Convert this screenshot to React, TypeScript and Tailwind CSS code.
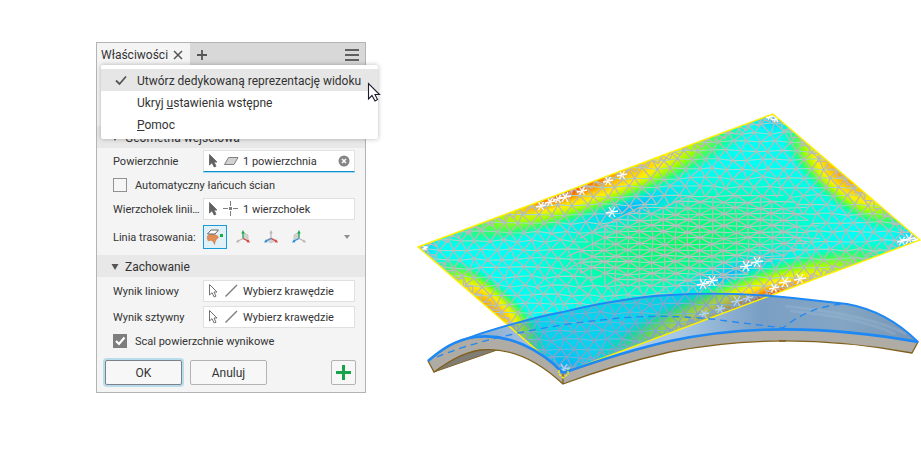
import React from "react";

type Point = [number, number];

const QUAD = "418,247 773,114 920,240 563,373";

const noise = (a: number, b: number) => {
  const v = Math.sin(a * 127.1 + b * 311.7) * 43758.5453;
  return v - Math.floor(v) - 0.5;
};

const outerNode = (i: number, j: number): Point => [
  412 + i * 14 + (j % 2 ? 7 : 0) + noise(i, j) * 4,
  106 + j * 9 + noise(j + 40, i) * 3,
];

const innerNode = (i: number, j: number): Point => [
  412 + i * 24 + (j % 2 ? 12 : 0) + noise(i, j) * 2,
  106 + j * 6 + noise(j + 40, i) * 2,
];

const inCore = ([x, y]: Point) => {
  const dx = (x - 690) / 115;
  const dy = (y - 238 + (x - 690) * 0.15) / 44;
  return dx * dx + dy * dy < 1;
};

function buildMesh() {
  let flat = "";
  let slanted = "";
  const seg = (a: Point, b: Point) =>
    `M${a[0].toFixed(1)} ${a[1].toFixed(1)}L${b[0].toFixed(1)} ${b[1].toFixed(1)}`;
  for (let j = 0; j < 31; j++) {
    for (let i = 0; i < 38; i++) {
      const p = outerNode(i, j);
      if (inCore(p)) continue;
      const shift = j % 2;
      flat += seg(p, outerNode(i + 1, j));
      slanted += seg(p, outerNode(i + shift, j + 1)) + seg(p, outerNode(i + shift - 1, j + 1));
    }
  }
  for (let j = 0; j < 46; j++) {
    for (let i = 0; i < 22; i++) {
      const p = innerNode(i, j);
      if (!inCore(p)) continue;
      const shift = j % 2;
      flat += seg(p, innerNode(i + 1, j));
      slanted += seg(p, innerNode(i + shift, j + 1)) + seg(p, innerNode(i + shift - 1, j + 1)) + seg(p, innerNode(i, j + 2));
    }
  }
  // Finer elements along the border of the sheet
  const edges: [Point, Point, Point][] = [
    [[418, 247], [773, 114], [2, 6]],
    [[563, 373], [920, 240], [-2, -6]],
    [[773, 114], [920, 240], [-5, 4]],
    [[418, 247], [563, 373], [5, -4]],
  ];
  edges.forEach(([a, b, n]) => {
    const count = Math.round(Math.hypot(b[0] - a[0], b[1] - a[1]) / 12);
    for (let k = 0; k < count; k++) {
      const at = (t: number, d: number): Point => [
        a[0] + ((b[0] - a[0]) * t) / count + n[0] * d,
        a[1] + ((b[1] - a[1]) * t) / count + n[1] * d,
      ];
      slanted += seg(at(k, 0), at(k + 0.5, 1)) + seg(at(k + 0.5, 1), at(k + 1, 0));
    }
  });
  return { flat, slanted };
}

const mesh = buildMesh();

const sparks: [number, number, number][] = [
  [612, 212, 6], [746, 266, 6], [757, 262, 6], [703, 284, 6], [712, 281, 6],
  [541, 206, 5], [550, 202, 5], [558, 199, 5], [565, 197, 6], [582, 191, 5],
  [608, 181, 5], [622, 175, 5], [770, 117, 4], [776, 119, 4], [902, 241, 5],
  [909, 239, 6], [916, 240, 4], [785, 282, 6], [800, 279, 6], [774, 288, 5],
  [564, 369, 6], [737, 301, 6], [748, 298, 5], [720, 309, 5], [704, 314, 5],
  [425, 248, 3],
];

const starPath = sparks
  .map(([x, y, r]) => `M${x - r} ${y + 1}L${x + r} ${y - 1}M${x - r / 2} ${y - r + 1}L${x + r / 2} ${y + r - 1}M${x + r / 2} ${y - r + 1}L${x - r / 2} ${y + r - 1}`)
  .join("");

const TOP = "M468 338C490 330 535 317 563 312C600 303 635 297 670 295C720 292 757 294 793 298L847 304C875 309 897 321 918 342";
const FRONT = "M918 342C830 326 745 325 670 341C630 350 600 360 563 373";
const ARC = "M428 361C442 349 455 340 475 337C508 333 540 349 563 373";
const SHELL = `${TOP}C830 326 745 325 670 341C630 350 600 360 563 373C540 349 508 333 475 337C455 340 442 349 428 361C445 348 455 343 468 338Z`;

function Model() {
  return (
    <svg className="mt-[100px] ml-11 min-w-0 flex-1" viewBox="410 100 511 300" role="img" aria-label="Model">
      <defs>
        <clipPath id="sheet"><polygon points={QUAD} /></clipPath>
        <radialGradient id="hot">
          <stop offset="0" stopColor="#ff9800" />
          <stop offset=".22" stopColor="#ffc000" />
          <stop offset=".45" stopColor="#fff000" />
          <stop offset=".62" stopColor="#a0ff00" />
          <stop offset=".8" stopColor="#30ff60" stopOpacity=".8" />
          <stop offset="1" stopColor="#00ffa0" stopOpacity="0" />
        </radialGradient>
        <radialGradient id="core">
          <stop offset="0" stopColor="#00ff60" />
          <stop offset=".4" stopColor="#00ff78" stopOpacity=".85" />
          <stop offset="1" stopColor="#00ffd0" stopOpacity="0" />
        </radialGradient>
        <radialGradient id="cold">
          <stop offset="0" stopColor="#00b8ff" />
          <stop offset="1" stopColor="#00e8ff" stopOpacity="0" />
        </radialGradient>
        <radialGradient id="red">
          <stop offset="0" stopColor="#ff4800" />
          <stop offset="1" stopColor="#ff8000" stopOpacity="0" />
        </radialGradient>
        <linearGradient id="glass" x1="0" y1="0" x2="1" y2="0">
          <stop offset="0" stopColor="#7598bf" />
          <stop offset=".3" stopColor="#b8d2ed" />
          <stop offset=".52" stopColor="#a5c5e2" />
          <stop offset=".68" stopColor="#7a9fc4" />
          <stop offset=".84" stopColor="#84a6c4" />
          <stop offset="1" stopColor="#7795b5" />
        </linearGradient>
      </defs>

      <path d="M434 372C452 357 475 348 500 349Z" fill="#7f7d76" stroke="#80622a" />
      <path d="M428 361C442 349 455 340 475 337C508 333 540 349 563 373C600 360 630 350 670 341C745 325 830 326 918 342L912 353C830 338 750 336 670 352C635 360 600 370 563 384C535 358 508 347 480 350C462 353 448 362 434 372Z" fill="#aeaca5" stroke="#80601c" strokeWidth="1.3" />
      <path d="M563 373V384M779 341H786" stroke="#80601c" strokeWidth="1.3" />
      <path d={SHELL} fill="url(#glass)" />
      <path d="M785 306C840 312 880 320 906 334M790 311C835 315 870 322 895 334" fill="none" stroke="#a9c3da" strokeWidth="3" opacity=".25" />

      <g clipPath="url(#sheet)">
        <polygon points={QUAD} fill="#00fff4" />
        <ellipse cx="680" cy="242" rx="180" ry="68" fill="url(#core)" transform="rotate(-12 680 242)" />
        <ellipse cx="630" cy="207" rx="85" ry="20" fill="url(#cold)" transform="rotate(-18 630 207)" />
        <ellipse cx="728" cy="275" rx="85" ry="18" fill="url(#cold)" transform="rotate(-20 728 275)" />
        <ellipse cx="418" cy="247" rx="26" ry="18" fill="url(#cold)" />
        <ellipse cx="773" cy="114" rx="26" ry="24" fill="url(#cold)" />
        <ellipse cx="920" cy="240" rx="34" ry="18" fill="url(#cold)" />
        <ellipse cx="563" cy="370" rx="34" ry="30" fill="url(#cold)" />
        <ellipse cx="597" cy="181" rx="167" ry="33" fill="url(#hot)" transform="rotate(-20.5 597 181)" />
        <ellipse cx="565" cy="194" rx="62" ry="10" fill="url(#red)" transform="rotate(-20.5 565 194)" />
        <ellipse cx="746" cy="306" rx="168" ry="33" fill="url(#hot)" transform="rotate(-20.5 746 306)" />
        <ellipse cx="765" cy="297" rx="60" ry="10" fill="url(#red)" transform="rotate(-20.5 765 297)" />
        <ellipse cx="845" cy="176" rx="82" ry="30" fill="url(#hot)" transform="rotate(40.6 845 176)" />
        <ellipse cx="490" cy="309" rx="75" ry="26" fill="url(#hot)" transform="rotate(41 490 309)" />
        <path d={mesh.flat} stroke="#a8d4c8" strokeWidth="1.1" />
        <path d={mesh.slanted} fill="none" stroke="#b9b9b9" strokeWidth="1.3" />
        <path d={starPath} stroke="#ffffff" strokeWidth="1.3" />
        <path d={SHELL} fill="#147de8" fillOpacity=".34" />
      </g>
      <polygon points={QUAD} fill="none" stroke="#fff200" strokeWidth="1.4" />

      <g fill="none" stroke="#1e88f5">
        <path d={TOP} strokeWidth="1.8" />
        <path d={FRONT} strokeWidth="2.6" />
        <path d={ARC} strokeWidth="2.6" />
        <path d="M437 357C470 343 530 327 610 319C655 314 700 317 727 321L783 328C800 314 820 305 847 304" strokeWidth="1.3" strokeDasharray="7 5" />
      </g>
      <path d="M559 370V374L563 378L568 374V369" fill="none" stroke="#fff200" strokeWidth="1.3" strokeDasharray="3 1" />
    </svg>
  );
}

function Cursor({ filled }: { filled?: boolean }) {
  return (
    <svg className="h-4 w-3 shrink-0" viewBox="0 0 12 16" aria-hidden="true">
      <path d="M2.5 1.5V12L5 9.7L7.2 14L9 13.2L7 9H10Z" fill={filled ? "#606060" : "#fff"} stroke="#707070" />
    </svg>
  );
}

function Glyph({ kind }: { kind: "face" | "vertex" | "edge" }) {
  return (
    <svg className="h-4 w-4 shrink-0" viewBox="0 0 16 16" fill="none" stroke="#808080" aria-hidden="true">
      {kind === "face" && <path d="M1.5 11.5L5.5 4.5H15L11 11.5Z" fill="#d2d2d2" />}
      {kind === "vertex" && (
        <>
          <path d="M7.5 0V5M7.5 10V15M0 7.5H5M10 7.5H15" />
          <path d="M6 6H9V9H6Z" fill="#808080" stroke="none" />
        </>
      )}
      {kind === "edge" && <path d="M2.5 13.5L14 2" strokeWidth="1.4" />}
    </svg>
  );
}

type PickerProps = {
  id: string;
  label: string;
  value: string;
  kind: "face" | "vertex" | "edge";
  picked?: boolean;
  active?: boolean;
};

function Picker({ id, label, value, kind, picked, active }: PickerProps) {
  return (
    <div className="flex items-center pr-2.5 pl-4">
      <label htmlFor={id} className="w-[90px] shrink-0 pt-0.5 whitespace-nowrap">{label}</label>
      <div className={`flex h-[22px] min-w-0 flex-1 items-center gap-1 border bg-white pr-1 pl-[3px] ${active ? "border-x-[#e2e2e2] border-t-[#e2e2e2] border-b-[#0a90d0] shadow-[0_1px_0_#a9d9ee]" : "border-[#e0e0e0]"}`}>
        <Cursor filled={picked} />
        <Glyph kind={kind} />
        <input id={id} readOnly defaultValue={value} className="min-w-0 flex-1 bg-transparent p-0 pt-0.5 outline-none" />
        {active && (
          <button aria-label="Wyczyść" className="shrink-0">
            <svg className="block h-3 w-3" viewBox="0 0 12 12" aria-hidden="true">
              <circle cx="6" cy="6" r="5.5" fill="#858585" />
              <path d="M4 4L8 8M8 4L4 8" stroke="#fff" strokeWidth="1.5" />
            </svg>
          </button>
        )}
      </div>
    </div>
  );
}

function Tick({ label, checked }: { label: string; checked?: boolean }) {
  return (
    <label className="flex h-[26px] items-center gap-2 pl-4">
      <span className="relative block h-3.5 w-3.5">
        <input type="checkbox" defaultChecked={checked} className="peer block h-3.5 w-3.5 appearance-none border border-[#929292] bg-[#f6f6f6] checked:border-[#7d7d7d] checked:bg-[#7d7d7d]" />
        <svg className="pointer-events-none absolute inset-0 hidden h-3.5 w-3.5 peer-checked:block" viewBox="0 0 14 14" fill="none" aria-hidden="true">
          <path d="M3 7L6 10L11.5 3.5" stroke="#fff" strokeWidth="2.2" />
        </svg>
      </span>
      <span className="pt-0.5">{label}</span>
    </label>
  );
}

function Axes({ variant }: { variant: "x" | "z" | "y" }) {
  const colors = {
    x: ["#18a94c", "#b5b5b5", "#df3c32"],
    z: ["#b5b5b5", "#2490e0", "#df3c32"],
    y: ["#18a94c", "#2490e0", "#b5b5b5"],
  }[variant];
  const planes = { x: "M8 3L13 6V12L8 9Z", z: "M8 9L13 11L8 14L3 11Z", y: "M8 3L3 6V12L8 9Z" };
  return (
    <svg className="block h-4 w-4" viewBox="0 0 16 16" fill="none" aria-hidden="true">
      <path d={planes[variant]} fill="#d2d2d2" stroke="#bcbcbc" strokeWidth=".7" />
      <path d="M8 9.5V3" stroke={colors[0]} strokeWidth="1.2" />
      <path d="M6.3 4.5L8 1L9.7 4.5Z" fill={colors[0]} />
      <path d="M8 9.5L3 12" stroke={colors[1]} strokeWidth="1.2" />
      <path d="M1 13.5L2.8 10.6L4.5 13.3Z" fill={colors[1]} />
      <path d="M8 9.5L13 12" stroke={colors[2]} strokeWidth="1.2" />
      <path d="M15 13.5L11.5 13.3L13.2 10.6Z" fill={colors[2]} />
    </svg>
  );
}

function SectionHead({ title }: { title: string }) {
  return (
    <h2 className="bg-[#e8e8e8]">
      <button className="flex h-[22px] w-full items-center gap-1.5 pt-0.5 pl-3.5 text-xs">
        <svg className="h-2 w-2" viewBox="0 0 8 8" aria-hidden="true"><path d="M0.5 1H7.5L4 7Z" fill="#555" /></svg>
        {title}
      </button>
    </h2>
  );
}

function Menu() {
  const item = "flex h-[22px] w-full items-center pt-px pl-3.5 text-left whitespace-nowrap";
  return (
    <div role="menu" className="absolute top-[65px] left-[101px] w-[277px] rounded-xs bg-white py-1 text-xs text-[#333] shadow-[0_0_5px_rgba(0,0,0,0.28)]">
      <button role="menuitem" className={`${item} bg-[#e6e6e6]`}>
        <svg className="mr-2.5 h-3 w-3" viewBox="0 0 12 12" fill="none" aria-hidden="true">
          <path d="M1 5.5L4.5 9L11 1.5" stroke="#555" strokeWidth="1.8" />
        </svg>
        Utwórz dedykowaną reprezentację widoku
      </button>
      <button role="menuitem" className={item}>
        <span className="ml-[22px]">Ukryj <u>u</u>stawienia wstępne</span>
      </button>
      <button role="menuitem" className={item}>
        <span className="ml-[22px]"><u>P</u>omoc</span>
      </button>
      <svg className="absolute top-[17px] left-[266px] h-5 w-[14px]" viewBox="0 0 14 20" aria-hidden="true">
        <path d="M1.5 1.5V17L5 13.5L8 19L10.5 17.5L8 12.5H12.5Z" fill="#fff" stroke="#1c1c2c" strokeWidth="1.1" />
      </svg>
    </div>
  );
}

export default function App() {
  return (
    <main className="relative flex items-start bg-white font-['Roboto','Noto_Sans',sans-serif] text-[11px] leading-4 text-[#333]">
      <section className="mt-[42px] ml-24 w-[270px] shrink-0 border border-[#b2b5b6] bg-[#f4f4f4]">
        <header className="flex h-6 items-center bg-[#d8d8d8]">
          <div className="flex h-6 w-[93px] items-center justify-between bg-[#f4f4f4] pr-1.5 pl-1 text-xs">
            Właściwości
            <button aria-label="Zamknij">
              <svg className="block h-3 w-3" viewBox="0 0 12 12" aria-hidden="true"><path d="M2 2L10 10M10 2L2 10" stroke="#555" strokeWidth="1.5" /></svg>
            </button>
          </div>
          <button aria-label="Dodaj kartę" className="ml-1.5">
            <svg className="block h-3 w-3" viewBox="0 0 12 12" aria-hidden="true"><path d="M1 6H11M6 1V11" stroke="#555" strokeWidth="1.8" /></svg>
          </button>
          <button aria-label="Menu" className="mr-1.5 ml-auto">
            <svg className="block h-3 w-3.5" viewBox="0 0 14 12" aria-hidden="true"><path d="M0 1H14M0 6H14M0 11H14" stroke="#606060" strokeWidth="2" /></svg>
          </button>
        </header>

        <div className="pt-[59px]">
          <SectionHead title="Geometria wejściowa" />
          <div className="pt-[2px]">
            <Picker id="faces" label="Powierzchnie" value="1 powierzchnia" kind="face" picked active />
            <Tick label="Automatyczny łańcuch ścian" />
            <Picker id="vertex" label="Wierzchołek linii…" value="1 wierzchołek" kind="vertex" picked />
            <div className="flex h-[35px] items-center pr-3 pb-0.5 pl-4">
              <span className="w-[90px] pt-0.5 whitespace-nowrap">Linia trasowania:</span>
              <button aria-label="Powierzchnia" className="flex h-6 w-6 items-center justify-center border border-[#1b9ad8] bg-[#e1f1f8]">
                <svg className="h-[18px] w-[18px]" viewBox="0 0 18 18" aria-hidden="true">
                  <path d="M1.5 8C1 10 1.5 12 2.5 13C4.5 11.5 7.5 12.5 8.5 16.5C9 13 10.5 10.5 12.5 9.5C11.5 6.5 4 5 1.5 8Z" fill="#e38c55" stroke="#bd713e" strokeWidth=".5" />
                  <path d="M1.5 6L5 2H12.5L9 6Z" fill="#fff" stroke="#666" />
                  <path d="M14 6H17V9H14Z" fill="#15ae4b" />
                </svg>
              </button>
              <div className="ml-2 flex gap-3">
                <button aria-label="Oś X"><Axes variant="x" /></button>
                <button aria-label="Oś Z"><Axes variant="z" /></button>
                <button aria-label="Oś Y"><Axes variant="y" /></button>
              </div>
              <button aria-label="Więcej" className="mr-0.5 ml-auto">
                <svg className="block h-2 w-2" viewBox="0 0 8 8" aria-hidden="true"><path d="M1 2H7L4 6Z" fill="#909090" /></svg>
              </button>
            </div>
          </div>

          <SectionHead title="Zachowanie" />
          <div className="pt-[3px]">
            <Picker id="linear" label="Wynik liniowy" value="Wybierz krawędzie" kind="edge" />
            <div className="mt-1">
              <Picker id="rigid" label="Wynik sztywny" value="Wybierz krawędzie" kind="edge" />
            </div>
            <Tick label="Scal powierzchnie wynikowe" checked />
          </div>
        </div>

        <footer className="flex gap-2 pt-1.5 pr-[9px] pb-[7px] pl-2 text-xs">
          <button className="h-[25px] w-[77px] rounded-xs border border-[#7c8287] bg-[#f7f7f7] shadow-[0_0_0_2px_#b9dced]">OK</button>
          <button className="h-[25px] w-[77px] rounded-xs border border-[#b3b3b3] bg-[#f7f7f7]">Anuluj</button>
          <button aria-label="Zastosuj" className="ml-auto flex h-[25px] w-[25px] items-center justify-center rounded-xs border border-[#b3b3b3] bg-[#f7f7f7]">
            <svg className="h-[15px] w-[15px]" viewBox="0 0 15 15" aria-hidden="true"><path d="M0 7.5H15M7.5 0V15" stroke="#16a34a" strokeWidth="3" /></svg>
          </button>
        </footer>
      </section>
      <Model />
      <Menu />
    </main>
  );
}
